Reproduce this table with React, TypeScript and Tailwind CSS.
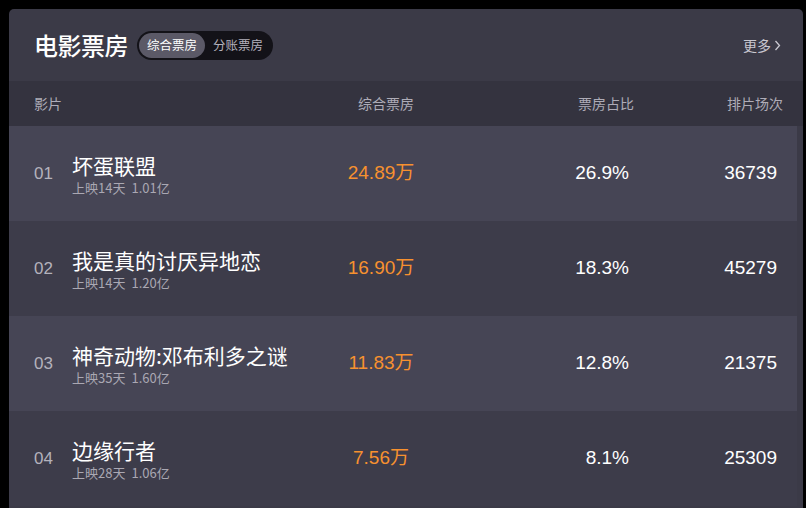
import { useState } from "react";

const movies = [
  { rank: "01", name: "坏蛋联盟", days: "上映14天", total: "1.01亿", box: "24.89万", share: "26.9%", shows: "36739" },
  { rank: "02", name: "我是真的讨厌异地恋", days: "上映14天", total: "1.20亿", box: "16.90万", share: "18.3%", shows: "45279" },
  { rank: "03", name: "神奇动物:邓布利多之谜", days: "上映35天", total: "1.60亿", box: "11.83万", share: "12.8%", shows: "21375" },
  { rank: "04", name: "边缘行者", days: "上映28天", total: "1.06亿", box: "7.56万", share: "8.1%", shows: "25309" },
];

const cjk = "font-['Noto_Sans_CJK_SC','Microsoft_YaHei',sans-serif]";
const num = "font-['Liberation_Sans','Noto_Sans_CJK_SC',sans-serif]";

export default function App() {
  const [tab, setTab] = useState<"all" | "split">("all");

  return (
    <div className={`h-[508px] overflow-hidden bg-black pl-[9px] pt-[9px] pr-[3px] ${cjk}`}>
      <div className="h-full overflow-hidden rounded-t-[5px] bg-[#3b3a47]">
        <div className="flex h-[72px] items-center pl-[25px] pr-[22px]">
          <h1 className="text-[24px] font-medium leading-none tracking-[-0.5px] text-white">电影票房</h1>
          <div className="ml-[9px] flex h-[29px] items-center rounded-full bg-[#131218] p-[2px]">
            <button
              className={`h-[25px] rounded-full px-[8px] text-[12.5px] leading-none ${
                tab === "all" ? "bg-[#5b5967] text-white" : "text-[#b3b1bc]"
              }`}
              onClick={() => setTab("all")}
            >
              综合票房
            </button>
            <button
              className={`h-[25px] rounded-full px-[8px] text-[12.5px] leading-none ${
                tab === "split" ? "bg-[#5b5967] text-white" : "text-[#b3b1bc]"
              }`}
              onClick={() => setTab("split")}
            >
              分账票房
            </button>
          </div>
          <a className="ml-auto flex items-center gap-[3px] text-[14px] text-[#c9c7d0]">
            更多
            <svg width="7" height="11" viewBox="0 0 7 11" fill="none">
              <path d="M1.5 1L5.5 5.5L1.5 10" stroke="currentColor" strokeWidth="1.3" />
            </svg>
          </a>
        </div>

        <div className="flex h-[45px] items-center bg-[#34333f] pl-[25px] pr-[20px] text-[14px] text-[#aeacb7]">
          <div className="flex-1">影片</div>
          <div className="w-[100px] text-right">综合票房</div>
          <div className="w-[220px] text-right">票房占比</div>
          <div className="w-[149px] text-right">排片场次</div>
        </div>

        <div className="pr-[6px]">
          {movies.map((m, i) => (
            <div
              key={m.rank}
              className={`flex h-[95px] items-center pr-[20px] ${i % 2 === 0 ? "bg-[#464555]" : "bg-[#3d3c4a]"}`}
            >
              <div className={`w-[63px] pl-[25px] text-[17px] text-[#b4b2bc] ${num}`}>{m.rank}</div>
              <div className="flex-1 pt-[2px]">
                <div className="text-[21px] leading-[26px] text-white">{m.name}</div>
                <div className="flex gap-[6px] text-[13px] leading-[20px] text-[#aaa8b3]">
                  <span>{m.days}</span>
                  <span>{m.total}</span>
                </div>
              </div>
              <div className={`w-[118px] text-center text-[19px] text-[#f7912f] ${num}`}>{m.box}</div>
              <div className={`w-[189px] text-right text-[19px] text-white ${num}`}>{m.share}</div>
              <div className={`w-[148px] text-right text-[19px] text-white ${num}`}>{m.shows}</div>
            </div>
          ))}
        </div>
      </div>
    </div>
  );
}
